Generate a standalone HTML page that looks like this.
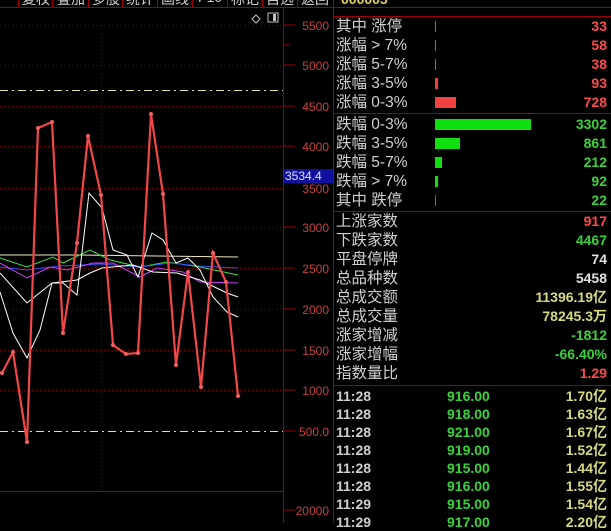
<!DOCTYPE html>
<html><head><meta charset="utf-8"><style>
body{margin:0;background:#000;width:611px;height:523px;overflow:hidden;position:relative;font-family:"Liberation Sans","Noto Sans CJK SC",sans-serif}
.r{position:absolute;left:336px;width:271px;height:19px;font-size:15.5px;line-height:19px;color:#d0d0d0;white-space:nowrap}
.r .v{position:absolute;right:0;top:0;font-family:"Liberation Sans","Noto Sans CJK SC",sans-serif;font-weight:bold;font-size:14px}
.r .b{position:absolute;left:99px;top:4px;height:11px}
.t{position:absolute;left:336px;width:271px;height:18px;font-size:14px;line-height:18px;font-family:"Liberation Sans","Noto Sans CJK SC",sans-serif;font-weight:bold;color:#d0d0d0}
.t span{position:absolute}
.red{color:#ff4a4a}.grn{color:#3ad23a}.wht{color:#e0e0e0}.yel{color:#d8d880}
.tb{position:absolute;top:-11px;font-size:14px;color:#d0d0d0;white-space:nowrap}
</style></head><body>
<div class="tb" style="left:22px">复权</div><div class="tb" style="left:57px">叠加</div><div class="tb" style="left:92px">多股</div><div class="tb" style="left:126px">统计</div><div class="tb" style="left:161px">画线</div><div class="tb" style="left:198px">F10</div><div class="tb" style="left:231px">标记</div><div class="tb" style="left:266px">自选</div><div class="tb" style="left:301px">返回</div>
<svg width="611" height="523" style="position:absolute;left:0;top:0">
<g stroke="#a00000" stroke-width="1" fill="none">
<line x1="0" y1="7.5" x2="611" y2="7.5"/>
<line x1="18.5" y1="0" x2="18.5" y2="7"/><line x1="52.5" y1="0" x2="52.5" y2="7"/><line x1="88.5" y1="0" x2="88.5" y2="7"/><line x1="122.5" y1="0" x2="122.5" y2="7"/><line x1="157.5" y1="0" x2="157.5" y2="7"/><line x1="192.5" y1="0" x2="192.5" y2="7"/><line x1="227.5" y1="0" x2="227.5" y2="7"/><line x1="262.5" y1="0" x2="262.5" y2="7"/><line x1="297.5" y1="0" x2="297.5" y2="7"/>
<line x1="283.5" y1="8" x2="283.5" y2="523"/><line x1="333.5" y1="0" x2="333.5" y2="523"/>
<line x1="0" y1="491.5" x2="283" y2="491.5"/>
<line x1="334" y1="16.5" x2="611" y2="16.5"/><line x1="334" y1="113.5" x2="611" y2="113.5"/><line x1="334" y1="211.5" x2="611" y2="211.5"/><line x1="334" y1="385.5" x2="611" y2="385.5"/>
</g>
<g stroke="#800000" stroke-dasharray="1 3">
<line x1="0" y1="25.5" x2="283" y2="25.5"/><line x1="0" y1="65.5" x2="283" y2="65.5"/><line x1="0" y1="106.5" x2="283" y2="106.5"/><line x1="0" y1="146.5" x2="283" y2="146.5"/><line x1="0" y1="188.5" x2="283" y2="188.5"/><line x1="0" y1="227.5" x2="283" y2="227.5"/><line x1="0" y1="268.5" x2="283" y2="268.5"/><line x1="0" y1="309.5" x2="283" y2="309.5"/><line x1="0" y1="350.5" x2="283" y2="350.5"/><line x1="0" y1="390.5" x2="283" y2="390.5"/>
<line x1="101.5" y1="25" x2="101.5" y2="491"/>
</g>
<g stroke="#e8e0a0" stroke-dasharray="8 4 2 4"><line x1="0" y1="90.5" x2="283" y2="90.5"/><line x1="0" y1="431.5" x2="283" y2="431.5"/></g>
<g stroke="#a00000"><line x1="283" y1="45" x2="289" y2="45"/><line x1="283" y1="25" x2="295" y2="25"/><line x1="283" y1="65" x2="295" y2="65"/><line x1="283" y1="106" x2="295" y2="106"/><line x1="283" y1="146" x2="295" y2="146"/><line x1="283" y1="227" x2="295" y2="227"/><line x1="283" y1="268" x2="295" y2="268"/><line x1="283" y1="309" x2="295" y2="309"/><line x1="283" y1="350" x2="295" y2="350"/><line x1="283" y1="390" x2="295" y2="390"/><line x1="283" y1="431" x2="295" y2="431"/><line x1="283" y1="510" x2="295" y2="510"/></g>
<g font-family="Liberation Sans" font-size="12" fill="#c84040" text-anchor="end">
<text x="329" y="30">5500</text><text x="329" y="70">5000</text><text x="329" y="111">4500</text><text x="329" y="151">4000</text><text x="329" y="193">3500</text><text x="329" y="232">3000</text><text x="329" y="273">2500</text><text x="329" y="314">2000</text><text x="329" y="355">1500</text><text x="329" y="395">1000</text><text x="329" y="436">500.0</text><text x="329" y="515">20000</text>
</g>
<rect x="284" y="169" width="49" height="14" fill="#1010a0"/>
<text x="285" y="180" font-family="Liberation Sans" font-size="12" fill="#e0e0ff">3534.4</text>
<path d="M252 19 l4 -4 4 4 -4 4z" stroke="#c0c0c0" fill="none"/>
<rect x="268" y="13" width="10" height="9" stroke="#c0c0c0" fill="none"/><rect x="273" y="14" width="3" height="7" fill="#c0c0c0"/>
<g fill="none" stroke-width="1">
<polyline stroke="#f0e8c0" points="0,255 77,255 238,257"/>
<polyline stroke="#40e040" points="0,258 27,267 53,257 63,263 90,250 110,260 140,267 167,262 200,267 238,275"/>
<polyline stroke="#3050ff" points="0,267 27,270 60,266 100,264 140,267 170,263 200,266 238,268"/>
<polyline stroke="#d040ff" points="0,263 27,278 50,267 67,270 93,263 113,263 140,277 157,268 183,272 200,282 238,283"/>
<polyline stroke="#ffffff" points="0,273 27,303 52,283 77,280 90,273 102,268 133,265 153,272 177,273 200,280 227,293 238,297"/>
<polyline stroke="#ffffff" points="0,292 13,333 27,358 40,330 52,283 63,283 77,295 89,193 102,208 113,250 127,255 138,277 152,233 163,240 176,263 188,258 200,270 213,297 227,312 238,317"/>
<polyline stroke="#f04848" stroke-width="2.2" points="2,373 13,352 27,442 38,128 52,122 63,333 77,243 88,136 101,195 113,345 126,354 138,353 151,114 163,194 176,365 188,272 201,387 213,253 226,282 238,396"/>
</g>
<g fill="#f06060"><circle cx="2" cy="373" r="2"/><circle cx="13" cy="352" r="2"/><circle cx="27" cy="442" r="2"/><circle cx="38" cy="128" r="2"/><circle cx="52" cy="122" r="2"/><circle cx="63" cy="333" r="2"/><circle cx="77" cy="243" r="2"/><circle cx="88" cy="136" r="2"/><circle cx="101" cy="195" r="2"/><circle cx="113" cy="345" r="2"/><circle cx="126" cy="354" r="2"/><circle cx="138" cy="353" r="2"/><circle cx="151" cy="114" r="2"/><circle cx="163" cy="194" r="2"/><circle cx="176" cy="365" r="2"/><circle cx="188" cy="272" r="2"/><circle cx="201" cy="387" r="2"/><circle cx="213" cy="253" r="2"/><circle cx="226" cy="282" r="2"/><circle cx="238" cy="396" r="2"/></g>
<text x="341" y="4" font-family="Liberation Sans" font-weight="bold" font-size="14" fill="#e0d060">000005</text>
</svg>

<div class="r" style="top:17px">其中 涨停<span class="b" style="width:1px;background:#f04040"></span><span class="v red">33</span></div>
<div class="r" style="top:36px">涨幅 &gt; 7%<span class="b" style="width:1px;background:#f04040"></span><span class="v red">58</span></div>
<div class="r" style="top:55px">涨幅 5-7%<span class="b" style="width:1px;background:#f04040"></span><span class="v red">38</span></div>
<div class="r" style="top:74px">涨幅 3-5%<span class="b" style="width:3px;background:#f04040"></span><span class="v red">93</span></div>
<div class="r" style="top:93px">涨幅 0-3%<span class="b" style="width:21px;background:#f04040"></span><span class="v red">728</span></div>
<div class="r" style="top:115px">跌幅 0-3%<span class="b" style="width:96px;background:#10e010"></span><span class="v grn">3302</span></div>
<div class="r" style="top:134px">跌幅 3-5%<span class="b" style="width:25px;background:#10e010"></span><span class="v grn">861</span></div>
<div class="r" style="top:153px">跌幅 5-7%<span class="b" style="width:7px;background:#10e010"></span><span class="v grn">212</span></div>
<div class="r" style="top:172px">跌幅 &gt; 7%<span class="b" style="width:3px;background:#10e010"></span><span class="v grn">92</span></div>
<div class="r" style="top:191px">其中 跌停<span class="b" style="width:1px;background:#10a010"></span><span class="v grn">22</span></div>
<div class="r" style="top:212px">上涨家数<span class="v red">917</span></div>
<div class="r" style="top:231px">下跌家数<span class="v grn">4467</span></div>
<div class="r" style="top:250px">平盘停牌<span class="v wht">74</span></div>
<div class="r" style="top:269px">总品种数<span class="v wht">5458</span></div>
<div class="r" style="top:288px">总成交额<span class="v yel">11396.19亿</span></div>
<div class="r" style="top:307px">总成交量<span class="v yel">78245.3万</span></div>
<div class="r" style="top:326px">涨家增减<span class="v grn">-1812</span></div>
<div class="r" style="top:345px">涨家增幅<span class="v grn">-66.40%</span></div>
<div class="r" style="top:364px">指数量比<span class="v red">1.29</span></div>

<div class="t" style="top:387px"><span>11:28</span><span class="grn" style="left:111px">916.00</span><span class="yel" style="right:0">1.70亿</span></div>
<div class="t" style="top:405px"><span>11:28</span><span class="grn" style="left:111px">918.00</span><span class="yel" style="right:0">1.63亿</span></div>
<div class="t" style="top:423px"><span>11:28</span><span class="grn" style="left:111px">921.00</span><span class="yel" style="right:0">1.67亿</span></div>
<div class="t" style="top:441px"><span>11:28</span><span class="grn" style="left:111px">919.00</span><span class="yel" style="right:0">1.52亿</span></div>
<div class="t" style="top:459px"><span>11:28</span><span class="grn" style="left:111px">915.00</span><span class="yel" style="right:0">1.44亿</span></div>
<div class="t" style="top:477px"><span>11:28</span><span class="grn" style="left:111px">916.00</span><span class="yel" style="right:0">1.55亿</span></div>
<div class="t" style="top:495px"><span>11:29</span><span class="grn" style="left:111px">915.00</span><span class="yel" style="right:0">1.54亿</span></div>
<div class="t" style="top:513px"><span>11:29</span><span class="grn" style="left:111px">917.00</span><span class="yel" style="right:0">2.20亿</span></div>
</body></html>
